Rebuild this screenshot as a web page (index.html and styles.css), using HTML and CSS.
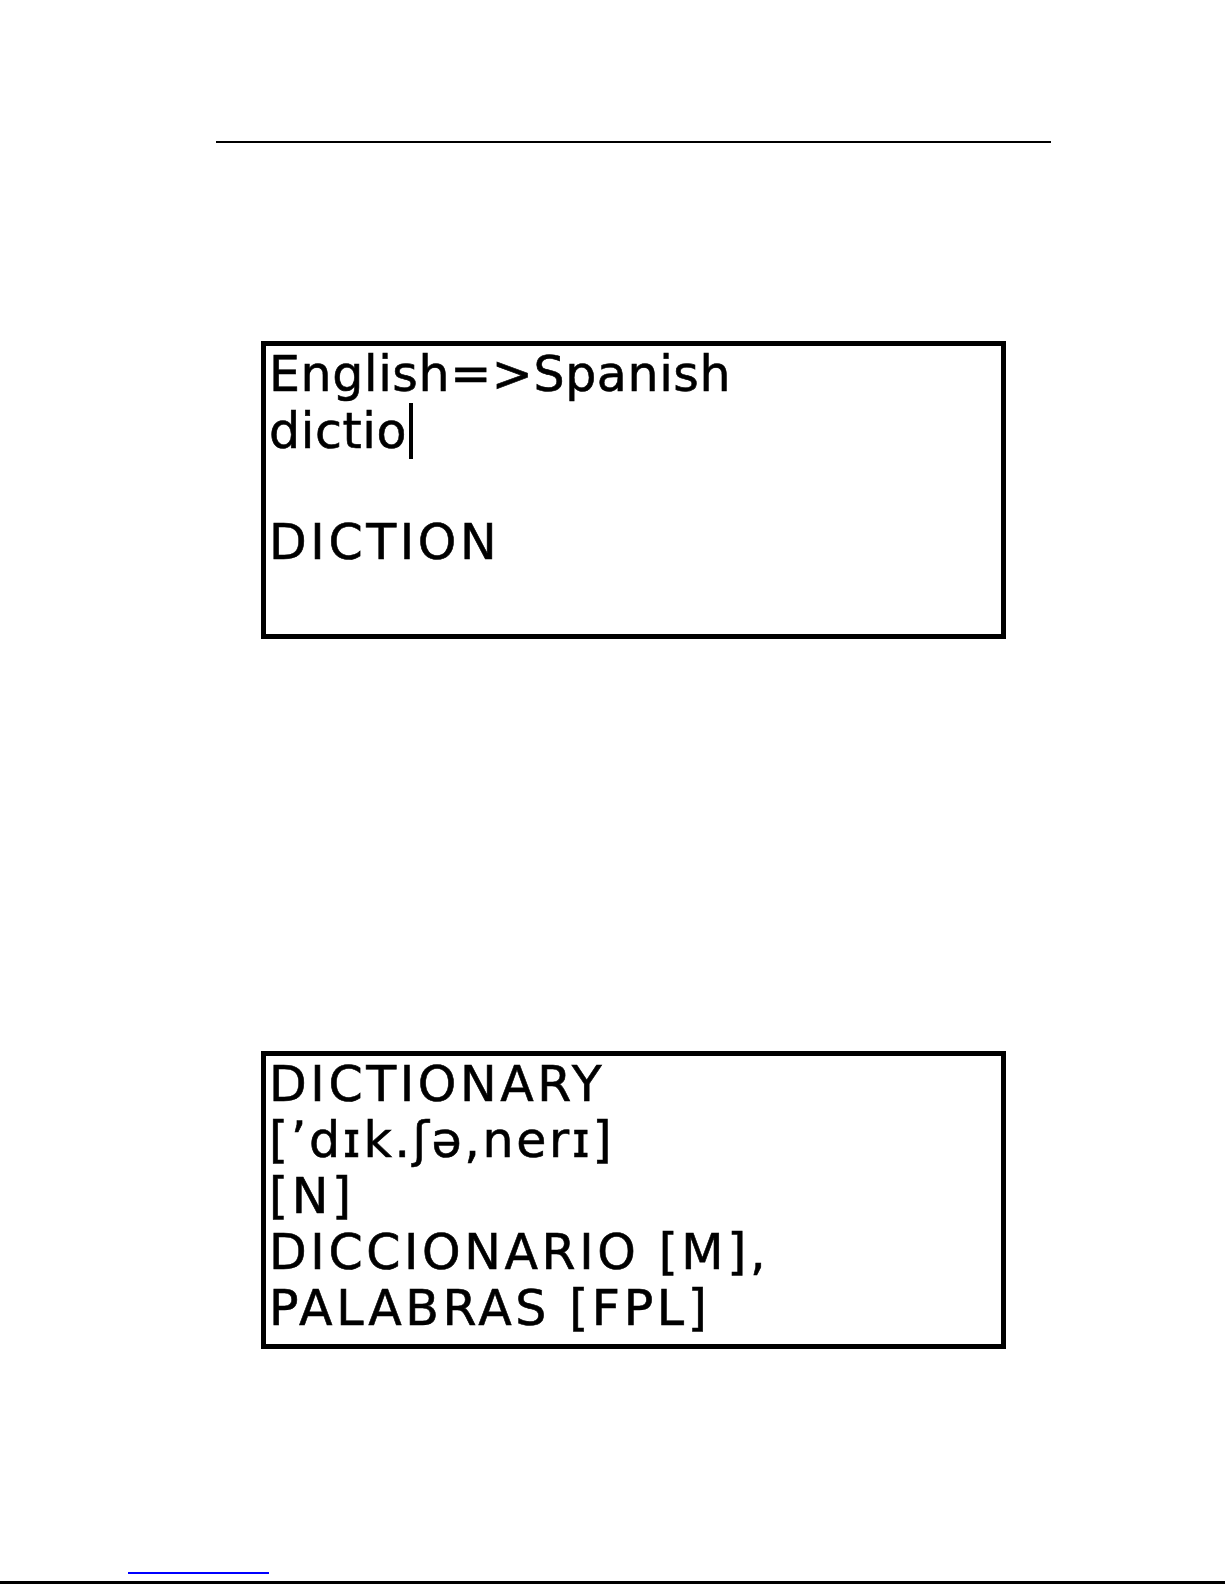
FILE: index.html
```html
<!DOCTYPE html>
<html lang="en">
<head>
  <meta charset="UTF-8">
  <meta name="viewport" content="width=device-width, initial-scale=1.0">
  <title>English=&gt;Spanish</title>
  <link rel="stylesheet" href="styles.css">
</head>
<body>
  <div class="page">
    <div class="rule"></div>

    <div class="screen screen-input">
      <p class="line">English=&gt;Spanish</p>
      <p class="line">dictio<span class="caret"></span></p>
      <p class="line">&nbsp;</p>
      <p class="line caps">DICTION</p>
      <p class="line">&nbsp;</p>
    </div>

    <div class="screen screen-result">
      <p class="line caps">DICTIONARY</p>
      <p class="line ipa">[ʼdɪk.ʃə,nerɪ]</p>
      <p class="line caps">[N]</p>
      <p class="line caps">DICCIONARIO [M],</p>
      <p class="line caps">PALABRAS [FPL]</p>
    </div>

    <div class="footer">
      <a class="footnote" href="#"></a>
    </div>
  </div>
</body>
</html>
```

FILE: styles.css
```css
* {
  margin: 0;
  padding: 0;
}
body {
  background-color: #fff;
  color: #000;
  font-family: "Liberation Serif", serif;
}
.page {
  width: 1225px;
  height: 1585px;
  overflow: hidden;
}
.rule {
  margin: 141px 0 0 216px;
  width: 835px;
  height: 2px;
  background-color: #000;
}

.screen {
  box-sizing: border-box;
  width: 745px;
  height: 298px;
  margin-left: 261px;
  padding: 1px 0 0 3px;
  border: 5px solid #000;
  font-family: "DejaVu Sans", sans-serif;
  font-size: 49px;
  line-height: 56px;
  letter-spacing: 0.6px;
  white-space: nowrap;
  -webkit-text-stroke: 0.6px #000;
}
.screen-input {
  margin-top: 198px;
}
.screen-result {
  margin-top: 412px;
}
.line {
  height: 56px;
}
.line.caps {
  letter-spacing: 3.6px;
}
.line.ipa {
  letter-spacing: 2.6px;
}
.caret {
  display: inline-block;
  width: 4px;
  height: 56px;
  margin-left: 2px;
  background-color: #000;
  vertical-align: -11px;
}

.footer {
  height: 235px;
  box-sizing: border-box;
  padding: 223px 0 0 128px;
  border-bottom: 3px solid #000;
}
.footnote {
  display: block;
  width: 141px;
  height: 0;
  border-bottom: 2px solid #00f;
}
```
